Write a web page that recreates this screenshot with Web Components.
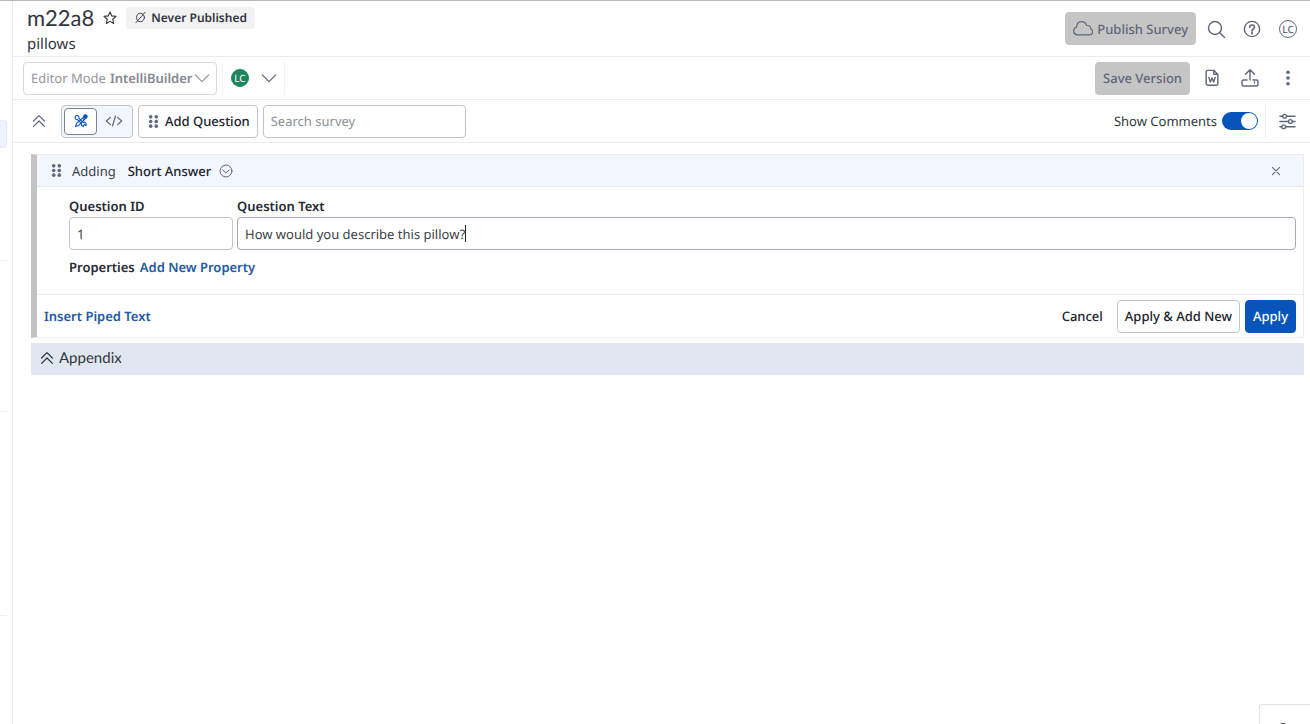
<!DOCTYPE html>
<html lang="en">
<head>
  <meta charset="UTF-8">
  <meta name="viewport" content="width=device-width, initial-scale=1.0">
  <title>m22a8 - Survey Editor</title>
  <style>
    body {
      --line: #ececee;
      --border: #c2c4ca;
      --slate: #5f677b;
      --blue: #0755bb;
      --pale: #f2f6fd;
      --family: "Noto Sans", "Open Sans", sans-serif;
      margin: 0;
      background: #fff;
      color: #32363e;
      font: 13px/20px var(--family);
      text-rendering: geometricPrecision;
    }
  </style>
</head>
<body>

<survey-app></survey-app>

<script>
const icons = {
  star: '<path d="M10 2.5l2.2 4.9 5.3.6-4 3.6 1.1 5.3-4.6-2.7-4.6 2.7 1.1-5.3-4-3.6 5.3-.6z"/>',
  never: '<ellipse cx="10" cy="10" rx="6" ry="6.5"/><path d="M3 18L17 2"/>',
  cloud: '<path d="M5 17.500a4.600 4.600 0 0 1-.9-9C4.300 4.500 6.800 2 10.200 2c2.700 0 4.900 1.700 5.700 4.200 3.100 0 5 1.700 5.100 4.400 1.500.6 2.200 1.900 2.200 3.300 0 2.200-1.500 3.600-3.700 3.600z"/>',
  search: '<circle cx="9" cy="9" r="6.500"/><path d="M14 14l4.500 4.500"/>',
  help: '<circle cx="10" cy="10" r="7.600"/><path stroke-width="1.700" d="M7.700 8.200c0-3 4.700-2.900 4.700 0 0 1.700-2.300 1.700-2.300 3.600M10.100 13.200v1.600"/>',
  down: '<path d="M2.500 6.500l7.500 7.500L17.500 6.500"/>',
  up2: '<path d="M4 10l6-6 6 6M4 16l6-6 6 6"/>',
  design: '<path d="M3.500 3.500a2.500 2.500 0 0 1 3.800 3l5.200 5.200a3 3 0 0 1 3.800 4l-2-1.500-1.500 2.500a3 3 0 0 1-2.300-3.500L5.700 8.300a2.500 2.500 0 0 1-3-2.800zM14 4.500l2 2L7 15.500l-4 1.500 1.500-4zM12 6.500l2 2"/><circle cx="15.500" cy="4.500" r="2.200" fill="currentColor"/>',
  code: '<path d="M6 6l-4.500 4L6 14M14 6l4.500 4-4.500 4M11.700 4.500l-3.400 11"/>',
  grip: '<g fill="currentColor" stroke="none"><circle cx="6.300" cy="3.800" r="2.400"/><circle cx="13.700" cy="3.800" r="2.400"/><circle cx="6.300" cy="10" r="2.400"/><circle cx="13.700" cy="10" r="2.400"/><circle cx="6.300" cy="16.200" r="2.400"/><circle cx="13.700" cy="16.200" r="2.400"/></g>',
  word: '<path stroke-width="1.600" d="M5.500 1.500h6.500l4.500 4.500v10.500q0 1.500-1.500 1.500H5.200Q3.500 18 3.500 16.500V3.500Q3.500 1.500 5.500 1.500zM12 1.500V6h4.500M6.500 9.300l1.600 5.200L10 10l1.900 4.500 1.600-5.200"/>',
  upload: '<path d="M10 12V2M5.500 6.300L10 1.800l4.500 4.500M7 12H3.500Q2 12 2 13.500v3Q2 18 3.500 18h13q1.500 0 1.500-1.500v-3q0-1.500-1.500-1.500H13M14.500 14v1"/>',
  dots: '<g fill="currentColor" stroke="none"><circle cx="10" cy="4.300" r="1.800"/><circle cx="10" cy="10" r="1.800"/><circle cx="10" cy="15.700" r="1.800"/></g>',
  sliders: '<path d="M2 4.500h3M9 4.500h9M2 10h9M15 10h3M2 15.500h2M8 15.500h10"/><circle cx="7" cy="4.500" r="2"/><circle cx="13" cy="10" r="2"/><circle cx="6" cy="15.500" r="2"/>',
  circledown: '<circle cx="10" cy="10" r="8.500"/><path d="M5.500 8.500L10 12.500l4.500-4"/>',
  close: '<path stroke-width="1.800" d="M4 4l12 12M16 4L4 16"/>'
};

class UiIcon extends HTMLElement {
  connectedCallback() {
    const size = this.getAttribute('size') || 20;
    const width = this.getAttribute('name') === 'cloud' ? 24 : 20;
    this.attachShadow({ mode: 'open' }).innerHTML = `
      <style>
        :host { display: inline-flex; flex: none; }
        svg { fill: none; stroke: currentColor; stroke-width: 1.4; stroke-linecap: round; stroke-linejoin: round; }
      </style>
      <svg aria-hidden="true" height="${size}" viewBox="0 0 ${width} 20">${icons[this.getAttribute('name')]}</svg>`;
  }
}
customElements.define('ui-icon', UiIcon);

// kind: outline (default), primary, muted, plain, link, icon
class UiButton extends HTMLElement {
  connectedCallback() {
    const label = this.getAttribute('label');
    this.attachShadow({ mode: 'open' }).innerHTML = `
      <style>
        :host { display: inline-flex; flex: none; }
        button {
          display: inline-flex;
          align-items: center;
          justify-content: center;
          gap: 4px;
          box-sizing: border-box;
          height: 33px;
          padding: 0 7px;
          border: 1px solid var(--border);
          border-radius: 4px;
          background: #fff;
          color: #20242d;
          font: 500 13px/20px var(--family);
          text-rendering: inherit;
          white-space: nowrap;
          cursor: pointer;
        }
        :host([kind=primary]) button { background: var(--blue); border-color: var(--blue); color: #fff; }
        :host([kind=muted]) button { background: #c5c5c5; border-color: #c5c5c5; color: var(--slate); }
        :host([kind=plain]) button { padding: 0 9px; border: 0; background: none; }
        :host([kind=link]) button { height: 20px; padding: 0; border: 0; background: none; color: #2458a0; font-weight: 600; }
        :host([kind=icon]) button { height: 24px; width: 24px; padding: 0; border: 0; background: none; color: var(--slate); }
      </style>
      <button type="button" ${label ? `aria-label="${label}"` : ''}><slot></slot></button>`;
  }
}
customElements.define('ui-button', UiButton);

class UiField extends HTMLElement {
  connectedCallback() {
    const label = this.getAttribute('label');
    this.attachShadow({ mode: 'open', delegatesFocus: true }).innerHTML = `
      <style>
        :host { display: block; }
        label { display: block; margin-bottom: 1px; color: #262a33; font-weight: 600; }
        .box {
          display: flex;
          align-items: center;
          box-sizing: border-box;
          height: 33px;
          padding: 0 7px;
          border: 1px solid var(--border);
          border-radius: 4px;
          background: #fff;
        }
        input {
          flex: 1;
          min-width: 0;
          padding: 0;
          border: 0;
          outline: none;
          background: none;
          color: #3b3f47;
          font: inherit;
          text-rendering: inherit;
        }
        input::placeholder { color: #8c9099; opacity: 1; }
        .caret { display: none; width: 1px; height: 17px; background: #20242d; }
        :host([active]) .box { border-color: #a4a9b5; }
        :host([active]) input { flex: none; field-sizing: content; caret-color: transparent; }
        :host([active]) .caret { display: block; }
      </style>
      ${label ? `<label for="field">${label}</label>` : ''}
      <div class="box">
        <input id="field" type="text" value="${this.getAttribute('value') || ''}"
          placeholder="${this.getAttribute('placeholder') || ''}"
          ${label ? '' : `aria-label="${this.getAttribute('placeholder')}"`}>
        <span class="caret"></span>
      </div>`;
  }
}
customElements.define('ui-field', UiField);

class UiAvatar extends HTMLElement {
  constructor() {
    super();
    this.attachShadow({ mode: 'open' }).innerHTML = `
      <style>
        :host {
          display: inline-flex;
          flex: none;
          align-items: center;
          justify-content: center;
          box-sizing: border-box;
          width: 18px;
          height: 18px;
          border: 1px solid var(--slate);
          border-radius: 50%;
          color: var(--slate);
          font: 500 10px/16px var(--family);
        }
        :host([solid]) { background: #1d855c; border-color: #1d855c; color: #fff; font-weight: 400; }
      </style>
      <slot></slot>`;
  }
}
customElements.define('ui-avatar', UiAvatar);

class UiToggle extends HTMLElement {
  constructor() {
    super();
    this.attachShadow({ mode: 'open' }).innerHTML = `
      <style>
        :host { display: block; }
        label { display: flex; align-items: center; gap: 5px; }
        input {
          appearance: none;
          display: flex;
          box-sizing: border-box;
          width: 36px;
          height: 18px;
          margin: 0;
          padding: 1px;
          border-radius: 9px;
          background: #8c9099;
        }
        input::before { content: ""; width: 16px; height: 16px; border-radius: 50%; background: #fff; }
        input:checked { justify-content: flex-end; background: var(--blue); }
      </style>
      <label><slot></slot><input type="checkbox" role="switch" checked></label>`;
  }
}
customElements.define('ui-toggle', UiToggle);

class SideRail extends HTMLElement {
  constructor() {
    super();
    this.attachShadow({ mode: 'open' }).innerHTML = `
      <style>
        :host { display: flex; flex-direction: column; flex: none; box-sizing: border-box; width: 13px; padding-top: 119px; border-right: 1px solid var(--line); }
        .current { height: 28px; margin-right: 5px; border-radius: 0 4px 4px 0; background: #edf4fd; border: 1px solid #dfe9f7; border-left: 0; box-sizing: border-box; }
        hr { width: 7px; margin: 0; border: 0; border-top: 1px solid var(--line); }
        .first { margin-top: 112px; }
        .second { margin-top: 150px; }
        .third { margin-top: 203px; }
      </style>
      <div class="current"></div>
      <hr class="first">
      <hr class="second">
      <hr class="third">`;
  }
}
customElements.define('side-rail', SideRail);

class SurveyHeader extends HTMLElement {
  constructor() {
    super();
    this.attachShadow({ mode: 'open' }).innerHTML = `
      <style>
        :host { display: flex; align-items: center; justify-content: space-between; box-sizing: border-box; height: 56px; padding: 0 13px 0 14px; border-bottom: 1px solid var(--line); }
        .title, .actions { display: flex; align-items: center; }
        .title { gap: 8px; }
        h1 { margin: 0; font: 400 22px/28px Lato, var(--family); }
        p { margin: 0; font-size: 15px; line-height: 24px; }
        .text { padding-top: 2px; }
        .status { display: flex; align-items: center; gap: 4px; height: 22px; padding: 0 8px; border-radius: 4px; background: #f2f2f2; font-weight: 600; font-size: 12px; }
        .actions { gap: 12px; color: var(--slate); }
        .actions ui-button:first-child { margin-right: -4px; }
        ui-avatar { margin-left: 3px; }
      </style>
      <div class="text">
        <div class="title">
          <h1>m22a8</h1>
          <ui-icon name="star" size="16"></ui-icon>
          <span class="status"><ui-icon name="never" size="13"></ui-icon>Never Published</span>
        </div>
        <p>pillows</p>
      </div>
      <div class="actions">
        <ui-button kind="muted"><ui-icon name="cloud" size="17"></ui-icon>Publish Survey</ui-button>
        <ui-button kind="icon" label="Search"><ui-icon name="search"></ui-icon></ui-button>
        <ui-button kind="icon" label="Help"><ui-icon name="help"></ui-icon></ui-button>
        <ui-avatar>LC</ui-avatar>
      </div>`;
  }
}
customElements.define('survey-header', SurveyHeader);

class VersionBar extends HTMLElement {
  constructor() {
    super();
    this.attachShadow({ mode: 'open' }).innerHTML = `
      <style>
        :host { display: flex; align-items: center; justify-content: space-between; box-sizing: border-box; height: 43px; padding: 0 10px; border-bottom: 1px solid var(--line); }
        div { display: flex; align-items: center; }
        .mode { box-sizing: border-box; height: 33px; padding: 0 5px 0 7px; gap: 4px; border: 1px solid #d8d9dd; border-radius: 4px; color: #94969c; }
        select { appearance: none; padding: 0; border: 0; background: none; color: #85888f; font: inherit; font-weight: 600; text-rendering: inherit; opacity: 1; }
        .people { height: 33px; gap: 8px; margin-left: 5px; padding: 0 3px 0 8px; border: 1px solid #f3f3f5; border-width: 0 1px; color: var(--slate); }
        .actions { gap: 14px; }
        .actions ui-button:first-child { margin-right: -4px; }
      </style>
      <div>
        <div class="mode">
          <label for="mode">Editor Mode</label>
          <div>
            <select id="mode"><option>IntelliBuilder</option></select>
            <ui-icon name="down" size="18"></ui-icon>
          </div>
        </div>
        <div class="people">
          <ui-avatar solid>LC</ui-avatar>
          <ui-button kind="icon" label="People"><ui-icon name="down" size="18"></ui-icon></ui-button>
        </div>
      </div>
      <div class="actions">
        <ui-button kind="muted">Save Version</ui-button>
        <ui-button kind="icon" label="Export to Word"><ui-icon name="word" size="18"></ui-icon></ui-button>
        <ui-button kind="icon" label="Upload"><ui-icon name="upload"></ui-icon></ui-button>
        <ui-button kind="icon" label="More"><ui-icon name="dots"></ui-icon></ui-button>
      </div>`;
  }
}
customElements.define('version-bar', VersionBar);

class EditorToolbar extends HTMLElement {
  constructor() {
    super();
    this.attachShadow({ mode: 'open' }).innerHTML = `
      <style>
        :host { display: flex; align-items: center; justify-content: space-between; box-sizing: border-box; height: 43px; padding: 0 11px 0 14px; border-bottom: 1px solid var(--line); }
        .tools, .options { display: flex; align-items: center; gap: 5px; }
        .views { display: flex; margin-left: 5px; padding: 2px; border: 1px solid var(--border); border-radius: 4px; background: var(--pale); }
        .views button { display: flex; align-items: center; justify-content: center; box-sizing: border-box; width: 33px; height: 27px; padding: 0; border: 1px solid transparent; border-radius: 4px; background: none; color: var(--slate); }
        .views .on { border-color: #79829a; background: #fff; color: var(--blue); }
        ui-field { width: 203px; }
        ui-button ui-icon { color: var(--slate); }
        .options { gap: 7px; }
        .filter { display: flex; align-items: center; height: 33px; padding-left: 9px; border-left: 1px solid var(--line); }
      </style>
      <div class="tools">
        <ui-button kind="icon" label="Collapse all"><ui-icon name="up2" size="18"></ui-icon></ui-button>
        <div class="views">
          <button class="on" type="button" aria-label="Design"><ui-icon name="design" size="16"></ui-icon></button>
          <button type="button" aria-label="Code"><ui-icon name="code" size="18"></ui-icon></button>
        </div>
        <ui-button><ui-icon name="grip" size="15"></ui-icon>Add Question</ui-button>
        <ui-field placeholder="Search survey"></ui-field>
      </div>
      <div class="options">
        <ui-toggle>Show Comments</ui-toggle>
        <div class="filter"><ui-button kind="icon" label="Filters"><ui-icon name="sliders" size="19"></ui-icon></ui-button></div>
      </div>`;
  }
}
customElements.define('editor-toolbar', EditorToolbar);

class QuestionEditor extends HTMLElement {
  constructor() {
    super();
    this.attachShadow({ mode: 'open' }).innerHTML = `
      <style>
        :host { display: block; border: 1px solid var(--line); border-left: 6px solid #c3c3c3; }
        header, footer, .left, .buttons, .properties { display: flex; align-items: center; }
        header { justify-content: space-between; height: 31px; padding: 0 15px 0 12px; border-bottom: 1px solid #e4e9f1; background: var(--pale); }
        .left { gap: 8px; color: #3b3f49; }
        .left ui-icon { color: var(--slate); }
        .type { margin-left: 4px; font-weight: 500; color: #20242d; }
        .body { padding: 9px 7px 17px 32px; }
        .fields { display: grid; grid-template-columns: 164px 1fr; gap: 4px; }
        .properties { gap: 5px; margin-top: 7px; font-weight: 600; color: #262a33; }
        footer { justify-content: space-between; height: 42px; padding: 0 7px; border-top: 1px solid var(--line); }
        .buttons { gap: 5px; }
      </style>
      <header>
        <div class="left">
          <ui-icon name="grip" size="15"></ui-icon>
          <span>Adding</span>
          <span class="type">Short Answer</span>
          <ui-icon name="circledown" size="14"></ui-icon>
        </div>
        <ui-button kind="icon" label="Close"><ui-icon name="close" size="12"></ui-icon></ui-button>
      </header>
      <div class="body">
        <div class="fields">
          <ui-field label="Question ID" value="1"></ui-field>
          <ui-field label="Question Text" value="How would you describe this pillow?" active></ui-field>
        </div>
        <div class="properties"><span>Properties</span><ui-button kind="link">Add New Property</ui-button></div>
      </div>
      <footer>
        <ui-button kind="link">Insert Piped Text</ui-button>
        <div class="buttons">
          <ui-button kind="plain">Cancel</ui-button>
          <ui-button>Apply &amp; Add New</ui-button>
          <ui-button kind="primary">Apply</ui-button>
        </div>
      </footer>`;
  }
}
customElements.define('question-editor', QuestionEditor);

class SurveySection extends HTMLElement {
  constructor() {
    super();
    this.attachShadow({ mode: 'open' }).innerHTML = `
      <style>
        :host { display: block; background: #e0e7f0; }
        h2 { display: flex; align-items: center; gap: 3px; box-sizing: border-box; height: 32px; margin: 0; padding: 0 7px 3px; font: 400 15px/20px Lato, var(--family); }
      </style>
      <h2><ui-icon name="up2" size="18"></ui-icon><slot></slot></h2>`;
  }
}
customElements.define('survey-section', SurveySection);

// Help widget tucked into the bottom corner of the window
class HelpDock extends HTMLElement {
  constructor() {
    super();
    this.attachShadow({ mode: 'open' }).innerHTML = `
      <style>
        :host { display: block; position: fixed; right: 0; bottom: 0; box-sizing: border-box; width: 51px; height: 20px; overflow: hidden; border: 1px solid #e2e2e2; border-width: 1px 0 0 1px; border-top-left-radius: 3px; background: #fff; }
        div { width: 10px; height: 10px; margin: 18px 0 0 18px; border-radius: 50%; background: #3f4148; }
      </style>
      <div></div>`;
  }
}
customElements.define('help-dock', HelpDock);

class SurveyApp extends HTMLElement {
  constructor() {
    super();
    this.attachShadow({ mode: 'open' }).innerHTML = `
      <style>
        :host { display: flex; box-sizing: border-box; min-height: 100vh; border-top: 1px solid #b9b9b9; }
        .page { flex: 1; min-width: 0; }
        main { display: flex; flex-direction: column; gap: 5px; padding: 11px 6px 0 18px; }
      </style>
      <side-rail></side-rail>
      <div class="page">
        <survey-header></survey-header>
        <version-bar></version-bar>
        <editor-toolbar></editor-toolbar>
        <main>
          <question-editor></question-editor>
          <survey-section>Appendix</survey-section>
        </main>
      </div>
      <help-dock></help-dock>`;
  }
}
customElements.define('survey-app', SurveyApp);
</script>

</body>
</html>
